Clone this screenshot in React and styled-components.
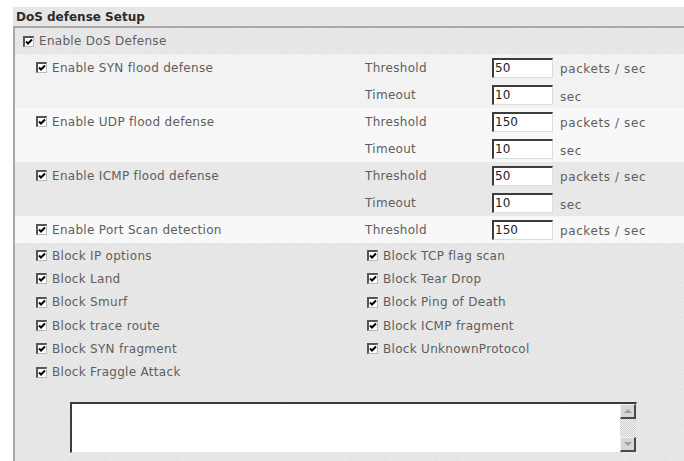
import React from 'react';
import styled, { createGlobalStyle } from 'styled-components';

const GlobalStyle = createGlobalStyle`
  html, body {
    margin: 0;
    padding: 0;
    background: #ffffff;
  }
  body {
    font-family: 'DejaVu Sans', Verdana, sans-serif;
    font-size: 12px;
    color: #5e5e5e;
  }
`;

const floods = [
  { label: 'Enable SYN flood defense', threshold: '50', timeout: '10', tone: '#f2f2f2' },
  { label: 'Enable UDP flood defense', threshold: '150', timeout: '10', tone: '#f8f8f8' },
  { label: 'Enable ICMP flood defense', threshold: '50', timeout: '10', tone: '#e8e8e8' },
];

const blocks = [
  'Block IP options',
  'Block TCP flag scan',
  'Block Land',
  'Block Tear Drop',
  'Block Smurf',
  'Block Ping of Death',
  'Block trace route',
  'Block ICMP fragment',
  'Block SYN fragment',
  'Block UnknownProtocol',
  'Block Fraggle Attack',
];

const hatch = `repeating-linear-gradient(
  135deg,
  #e3e3e3 0,
  #e3e3e3 1px,
  #e8e8e8 1px,
  #e8e8e8 3px
)`;

const CheckMark = () => (
  <Box>
    <svg width='8' height='8' viewBox='0 0 8 8'>
      <path d='M1 3.5 L3 5.5 L7 1.5' fill='none' stroke='#000' strokeWidth='2' />
    </svg>
  </Box>
);

const App = () => {
  return (
    <Page>
      <GlobalStyle />
      <Title>DoS defense Setup</Title>
      <Panel>
        <MasterRow>
          <CheckMark />
          Enable DoS Defense
        </MasterRow>

        {floods.map((f) => (
          <Group key={f.label} $tone={f.tone}>
            <Label>
              <CheckMark />
              {f.label}
            </Label>
            <Field>Threshold</Field>
            <NumBox value={f.threshold} readOnly />
            <Unit $drop={2}>packets / sec</Unit>
            <span />
            <Field>Timeout</Field>
            <NumBox value={f.timeout} readOnly />
            <Unit $drop={5}>sec</Unit>
          </Group>
        ))}

        <Group $tone='#f8f8f8'>
          <Label>
            <CheckMark />
            Enable Port Scan detection
          </Label>
          <Field>Threshold</Field>
          <NumBox value='150' readOnly />
          <Unit $drop={2}>packets / sec</Unit>
        </Group>

        <BlockGrid>
          {blocks.map((b) => (
            <Option key={b}>
              <CheckMark />
              {b}
            </Option>
          ))}
        </BlockGrid>

        <LogBox>
          <LogText />
          <ScrollBar>
            <ScrollButton>
              <Arrow $up />
            </ScrollButton>
            <Track />
            <ScrollButton>
              <Arrow />
            </ScrollButton>
          </ScrollBar>
        </LogBox>
      </Panel>
    </Page>
  );
};

export default App;

const Page = styled.div`
  padding: 7px 0 0 13px;
  width: 671px;
`;

const Title = styled.div`
  height: 19px;
  line-height: 20px;
  padding-left: 3px;
  font-weight: bold;
  font-size: 12px;
  color: #2b2b2b;
  background: ${hatch};
  border-bottom: 2px solid #a9a9a9;
`;

const Panel = styled.div`
  border-left: 2px solid #a8a8a8;
  background: ${hatch};
  padding-bottom: 12px;
  letter-spacing: 0.3px;
`;

const Box = styled.span`
  display: inline-flex;
  align-items: center;
  justify-content: center;
  box-sizing: border-box;
  width: 11px;
  height: 11px;
  margin-right: 5px;
  background: #ffffff;
  border-top: 2px solid #555555;
  border-left: 2px solid #555555;
  border-right: 1px solid #b8b8b8;
  border-bottom: 1px solid #b8b8b8;
  flex-shrink: 0;

  svg {
    display: block;
  }
`;

const MasterRow = styled.div`
  display: flex;
  align-items: center;
  height: 26px;
  padding-left: 8px;
`;

const Group = styled.div`
  display: grid;
  grid-template-columns: 350px 127px 68px 1fr;
  grid-auto-rows: 27px;
  align-items: center;
  background: ${(p) => p.$tone};
`;

const Label = styled.div`
  display: flex;
  align-items: center;
  padding-left: 21px;
  white-space: nowrap;
`;

const Option = styled.div`
  display: flex;
  align-items: center;
  white-space: nowrap;
`;

const Field = styled.div`
  white-space: nowrap;
`;

const NumBox = styled.input`
  box-sizing: border-box;
  width: 61px;
  height: 20px;
  margin: 0;
  padding: 0 1px;
  font-family: 'DejaVu Sans', Verdana, sans-serif;
  font-size: 12px;
  color: #222222;
  background: #ffffff;
  border-top: 2px solid #3c3c3c;
  border-left: 2px solid #3c3c3c;
  border-right: 1px solid #dcdcdc;
  border-bottom: 1px solid #dcdcdc;
  outline: none;
`;

const Unit = styled.div`
  padding-top: ${(p) => p.$drop}px;
  white-space: nowrap;
  letter-spacing: 0.6px;
`;

const BlockGrid = styled.div`
  display: grid;
  grid-template-columns: 331px 1fr;
  grid-auto-rows: 23.3px;
  align-items: center;
  padding: 1px 0 0 21px;
`;

const LogBox = styled.div`
  display: flex;
  box-sizing: border-box;
  width: 567px;
  height: 51px;
  margin: 18px 0 0 55px;
  background: #ffffff;
  border-top: 2px solid #3c3c3c;
  border-left: 2px solid #3c3c3c;
  border-right: 1px solid #e4e4e4;
  border-bottom: 1px solid #e4e4e4;
`;

const LogText = styled.div`
  flex: 1;
`;

const ScrollBar = styled.div`
  display: flex;
  flex-direction: column;
  width: 16px;
`;

const ScrollButton = styled.div`
  box-sizing: border-box;
  height: 15px;
  display: flex;
  align-items: center;
  justify-content: center;
  background: #d6d6d6;
  border-top: 1px solid #f2f2f2;
  border-left: 1px solid #f2f2f2;
  border-right: 2px solid #4a4a4a;
  border-bottom: 2px solid #4a4a4a;
`;

const Arrow = styled.span`
  width: 0;
  height: 0;
  border-left: 4px solid transparent;
  border-right: 4px solid transparent;
  ${(p) =>
    p.$up
      ? 'border-bottom: 4px solid #a0a0a0;'
      : 'border-top: 4px solid #a0a0a0;'}
`;

const Track = styled.div`
  flex: 1;
  background: repeating-conic-gradient(#cfcfcf 0 25%, #f2f2f2 0 50%) 0 0 / 2px 2px;
`;
